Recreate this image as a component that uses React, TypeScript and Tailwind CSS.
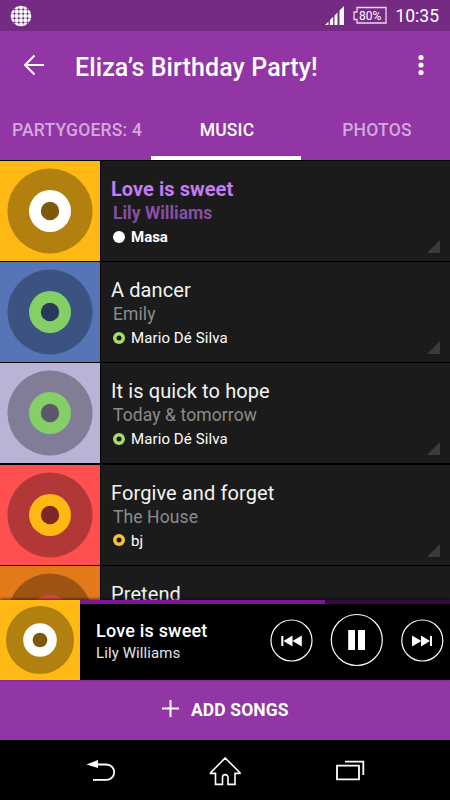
import { clsx } from 'clsx';

interface Song {
  title: string;
  artist?: string;
  addedBy?: string;
  cover: string;
  disc: string;
  label: string;
  hole: string;
  marker?: string;
  playing?: boolean;
}

const songs: Song[] = [
  { title: 'Love is sweet', artist: 'Lily Williams', addedBy: 'Masa', cover: '#ffb814', disc: '#b2800e', label: '#ffffff', hole: '#7d5a0a', marker: '#ffffff', playing: true },
  { title: 'A dancer', artist: 'Emily', addedBy: 'Mario Dé Silva', cover: '#5575b7', disc: '#3c5280', label: '#84d066', hole: '#29395a', marker: '#a5dc6c' },
  { title: 'It is quick to hope', artist: 'Today & tomorrow', addedBy: 'Mario Dé Silva', cover: '#bab3d6', disc: '#827d96', label: '#84d066', hole: '#5b5869', marker: '#a5dc6c' },
  { title: 'Forgive and forget', artist: 'The House', addedBy: 'bj', cover: '#ff4f4f', disc: '#b23737', label: '#ffb814', hole: '#7d2727', marker: '#f6c232' },
  { title: 'Pretend', cover: '#e27a1b', disc: '#9e5513', label: '#dd4a4f', hole: '#6f3c0d' },
];

function Cover({ song, className }: { song: Song; className: string }) {
  return (
    <svg viewBox="0 0 100 100" className={clsx('block shrink-0', className)}>
      <rect width="100" height="100" fill={song.cover} />
      <circle cx="50" cy="50" r="42.6" fill={song.disc} />
      <circle cx="50" cy="50" r="21" fill={song.label} />
      <circle cx="50" cy="50" r="9.2" fill={song.hole} />
    </svg>
  );
}

function SongRow({ song }: { song: Song }) {
  return (
    <li className="relative flex h-[100px] shrink-0 gap-px">
      <Cover song={song} className="size-[100px]" />
      <div className="flex-1 bg-[#1b1b1b] pt-4 pl-[10px] whitespace-nowrap">
        <p
          className={clsx(
            'text-[20px] leading-6',
            song.playing ? 'font-bold tracking-[0.05px] text-[#c579f2]' : 'tracking-[0.1px] text-[#f4f4f4]',
          )}
        >
          {song.title}
        </p>
        {song.artist && (
          <p
            className={clsx(
              'pl-[2px] text-[17.5px] leading-[25px]',
              song.playing ? 'font-bold text-[#864fa5]' : 'tracking-[0.1px] text-[#8c8c8c]',
            )}
          >
            {song.artist}
          </p>
        )}
        {song.addedBy && (
          <div className="flex h-[23px] gap-[6px] pl-[2px]">
            <svg viewBox="0 0 12 12" className="mt-[4.5px] size-3">
              <circle cx="6" cy="6" r="6" fill={song.marker} />
              {!song.playing && <circle cx="6" cy="6" r="2.5" fill="#1b1b1b" />}
            </svg>
            <span
              className={clsx('text-[15px] leading-[22px] text-white', song.playing ? 'font-bold' : 'tracking-[0.1px]')}
            >
              {song.addedBy}
            </span>
          </div>
        )}
      </div>
      <svg viewBox="0 0 13 13" className="absolute right-[10px] bottom-[8px] size-[13px]">
        <path d="M13 0V13H0Z" fill="#3b3b3b" />
      </svg>
    </li>
  );
}

function StatusBar() {
  const holes = [4.5, 8.8, 13.2, 17.5];
  return (
    <div className="flex h-[31px] shrink-0 items-start bg-[#752b83] pr-[11px] pl-[10px]">
      <svg viewBox="0 0 22 22" className="mt-[5px] size-[22px]">
        <circle cx="11" cy="11" r="10.3" fill="#fff" />
        <path
          d="M4.500 2v18M8.800 0v22M13.200 0v22M17.500 2v18M2 4.500h18M0 8.800h22M0 13.200h22M2 17.500h18"
          stroke="#752b83"
          strokeWidth=".4"
        />
        {holes.map((y) => holes.map((x) => <circle key={`${x}-${y}`} cx={x} cy={y} r="1" fill="#752b83" />))}
      </svg>
      <svg viewBox="0 0 20 20" className="mt-[6px] ml-[292px] h-5 w-5">
        <path d="M1 19 4.5 15.500V19zM6 14l3.200-3.200V19H6zM10.500 9.500l3-3V19h-3zM15.500 4.500 20 0V19h-4.500z" fill="#fff" />
      </svg>
      <div className="relative mt-[6px] ml-[9px] h-[18px] w-[34px]">
        <svg viewBox="0 0 34 18" className="absolute inset-0">
          <path d="M4 1.500H33V17H4V13.500H1V6H4Z" fill="none" stroke="#ead9ee" strokeWidth="1.300" />
        </svg>
        <span className="relative block pl-[6px] text-[12px] leading-5 text-white">80%</span>
      </div>
      <span className="ml-auto text-[17.5px] leading-[33px] text-white">10:35</span>
    </div>
  );
}

function Tab({ label, active }: { label: string; active?: boolean }) {
  return (
    <div
      className={clsx(
        'w-[150px] shrink-0 border-b-4 pl-[2px] text-center text-[17.5px] leading-[60px] font-medium tracking-[0.2px]',
        active ? 'border-white text-white' : 'border-transparent text-[#d3a9dc]',
      )}
    >
      {label}
    </div>
  );
}

function PlayerBar() {
  return (
    <div className="relative flex h-20 shrink-0 bg-black shadow-[0_-1px_3px_rgba(0,0,0,0.6)]">
      <Cover song={songs[0]} className="size-20" />
      <div className="flex flex-1 flex-col">
        <div className="h-1 bg-[#350a41]">
          <div className="h-full w-[245px] bg-[#7b1795]" />
        </div>
        <div className="flex flex-1">
          <div className="w-[190px] pt-4 pl-4 whitespace-nowrap">
            <p className="text-[18px] leading-[22px] font-medium tracking-[0.2px] text-white">{songs[0].title}</p>
            <p className="text-[15px] leading-[22px] tracking-[0.1px] text-[#e4e4e4]">{songs[0].artist}</p>
          </div>
          <svg viewBox="0 0 180 76" className="h-[76px] w-[180px]" fill="none" stroke="#fff" strokeWidth="1.200">
            <circle cx="21.500" cy="36.500" r="20.500" />
            <circle cx="86.800" cy="36" r="25.500" />
            <circle cx="152.300" cy="36.500" r="20.500" />
            <g fill="#fff" stroke="none">
              <path d="M11.300 32h2v10h-2zM22.500 31.500v11l-9-5.500zM31.800 31.500v11l-9.300-5.500z" />
              <path d="M78.200 26h6.800v20h-6.800zM88 26h7v20h-7z" />
              <path d="M142 31.500l9.300 5.500-9.300 5.500zM151 31.500l9 5.500-9 5.500zM160 32h2v10h-2z" />
            </g>
          </svg>
        </div>
      </div>
    </div>
  );
}

function NavBar() {
  return (
    <div className="h-[60px] shrink-0 bg-black">
      <svg viewBox="0 0 450 60" className="h-full w-full" fill="none" stroke="#fff" strokeWidth="1.800">
        <path d="M96 24.500h10.500a7.500 7.500 0 0 1 0 15.300H93" />
        <path d="M86.500 24.500 98 20v8z" fill="#fff" stroke="none" />
        <path d="M225.200 18 240 32.800v.6h-5v11h-7v-7a2.500 2.500 0 0 0-5.500 0v7h-7v-11h-5v-.6z" strokeWidth="1.600" />
        <path d="M337 25.700h22v13.600h-22zM345 21.700h18.300V35" />
      </svg>
    </div>
  );
}

export default function App() {
  return (
    <div className="flex h-[800px] w-[450px] flex-col overflow-hidden bg-black font-['Roboto',sans-serif]">
      <StatusBar />
      <header className="flex h-[129px] shrink-0 flex-col bg-[#9235a5]">
        <div className="flex h-[69px] items-start pr-[19px] pl-[23px]">
          <svg viewBox="0 0 22 22" className="mt-[23px] size-[22px]" fill="none" stroke="#fff" strokeWidth="2">
            <path d="M21 11H2M11.500 1.500 2 11l9.500 9.500" />
          </svg>
          <h1 className="ml-[30px] text-[25px] leading-[73px] font-medium tracking-[0.1px] text-white">
            Eliza’s Birthday Party!
          </h1>
          <svg viewBox="0 0 6 22" className="mt-[23px] ml-auto h-[22px] w-[20px]" fill="#fff">
            <circle cx="3" cy="3.500" r="2.600" />
            <circle cx="3" cy="11" r="2.600" />
            <circle cx="3" cy="18.500" r="2.600" />
          </svg>
        </div>
        <nav className="flex h-[60px] overflow-hidden pl-px">
          <Tab label="PARTYGOERS: 4" />
          <Tab label="MUSIC" active />
          <Tab label="PHOTOS" />
        </nav>
      </header>
      <ul className="flex min-h-0 flex-1 flex-col gap-[1.2px] overflow-hidden pt-px">
        {songs.map((song) => (
          <SongRow key={song.title} song={song} />
        ))}
      </ul>
      <PlayerBar />
      <button className="flex h-[60px] shrink-0 items-center bg-[#9235a5] pl-[162px] text-white">
        <svg viewBox="0 0 17 17" className="mb-[3px] size-[17px]" stroke="#fff" strokeWidth="2">
          <path d="M8.500 0v17M0 8.500h17" />
        </svg>
        <span className="ml-3 text-[17.5px] font-bold tracking-[0.1px]">ADD SONGS</span>
      </button>
      <NavBar />
    </div>
  );
}
